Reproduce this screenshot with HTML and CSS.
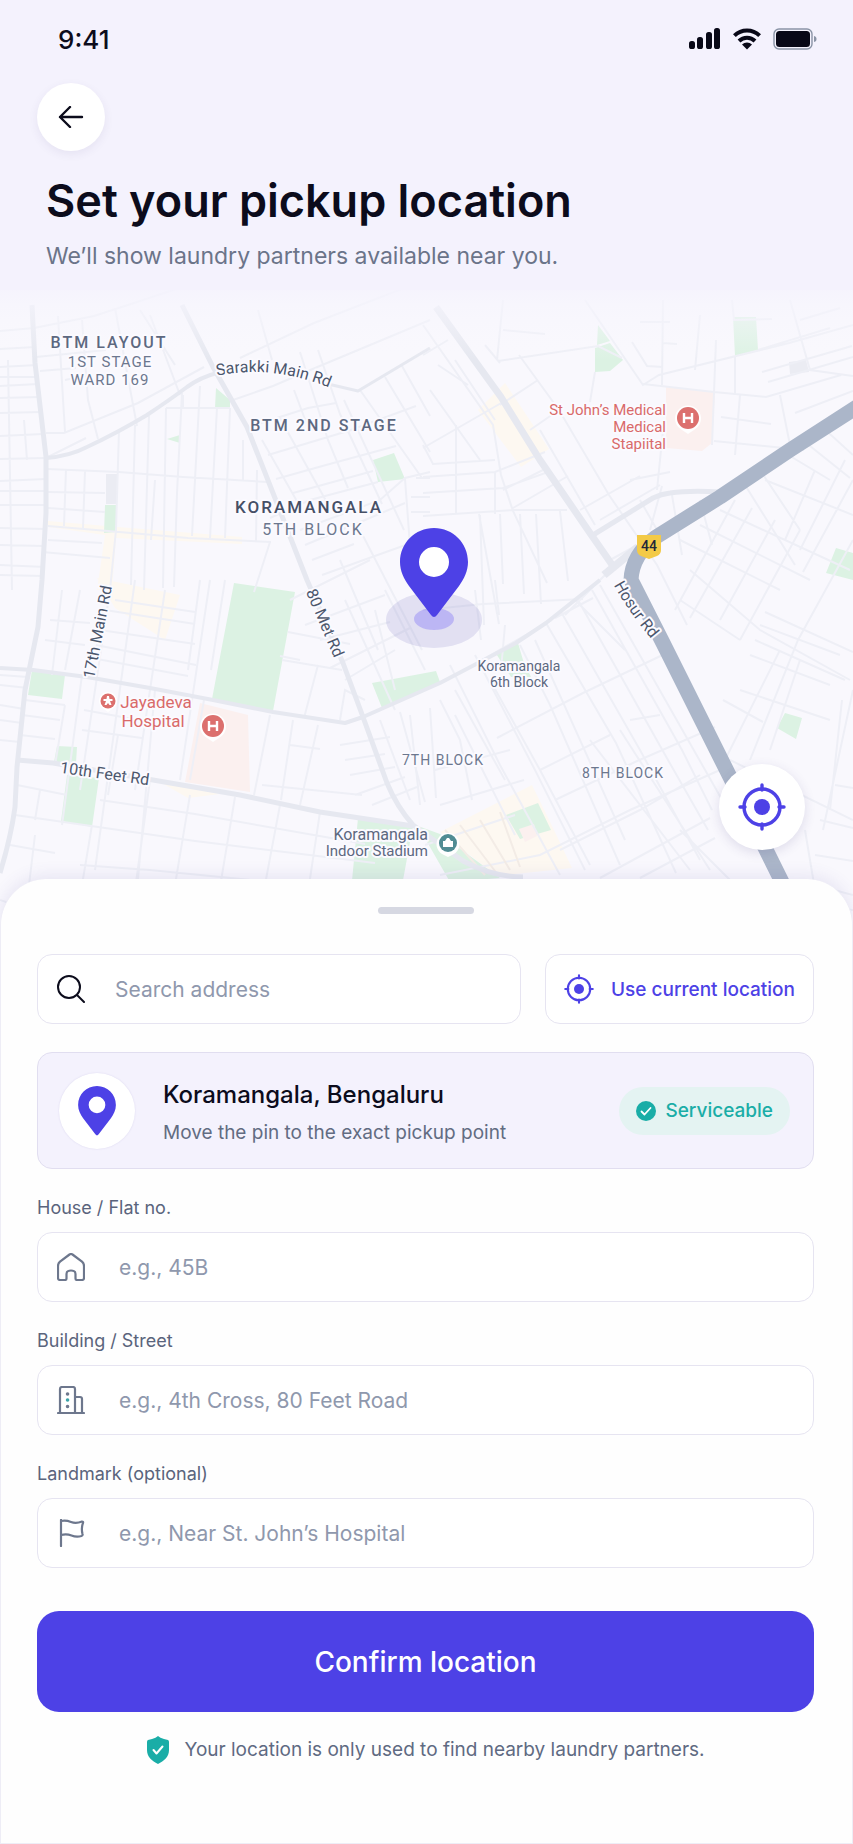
FILE: index.html
```html
<!DOCTYPE html>
<html lang="en">
<head>
<meta charset="utf-8">
<meta name="viewport" content="width=device-width, initial-scale=1">
<title>Set your pickup location</title>
<link rel="stylesheet" href="styles.css">
</head>
<body>
<svg class="sprite" aria-hidden="true">
  <symbol id="pin" viewBox="0 0 68 90">
    <path fill="#4d41e6" fill-rule="evenodd" d="M34 0C15 0 0 15 0 34c0 9 4 17 9 24l22 29q3 4 6 0l22-29c5-7 9-15 9-24C68 15 53 0 34 0zm0 19a15 15 0 1 1 0 30 15 15 0 0 1 0-30z"/>
  </symbol>
  <symbol id="locate" viewBox="0 0 48 48">
    <g fill="none" stroke="currentColor" stroke-width="3.4" stroke-linecap="round"><circle cx="24" cy="24" r="18"/><path d="M24 2v5M24 41v5M2 24h5M41 24h5"/></g>
    <circle cx="24" cy="24" r="8" fill="currentColor"/>
  </symbol>
</svg>
<main class="screen">
  <header class="header">
    <div class="status">
      <span class="status-time">9:41</span>
      <div class="status-icons">
        <svg width="32" height="22" viewBox="0 0 32 22" fill="#080817" aria-label="Signal"><rect x="0" y="13" width="6" height="8" rx="2.6"/><rect x="8" y="9" width="6" height="12" rx="2.6"/><rect x="17" y="4" width="6" height="17" rx="2.6"/><rect x="25" y="0" width="6" height="21" rx="2.6"/></svg>
        <svg width="28" height="22" viewBox="0 0 28 22" aria-label="Wi-Fi"><g fill="none" stroke="#080817" stroke-width="4"><path d="M1.400 7.600a18 18 0 0 1 25.200 0"/><path d="M6 13a11.500 11.500 0 0 1 16 0"/></g><path fill="#080817" d="M9 16.500a7.500 7.500 0 0 1 10 0L14 21.500z"/></svg>
        <svg width="44" height="22" viewBox="0 0 44 22" aria-label="Battery"><rect x="1" y="1" width="38" height="20" rx="5" fill="none" stroke="#8a94a6" stroke-width="1.400"/><rect x="3" y="3" width="34" height="16" rx="3.500" fill="#080817"/><path fill="#8a94a6" d="M41 8c2 .5 2.500 1.500 2.500 3s-.5 2.500-2.500 3z"/></svg>
      </div>
    </div>
    <button class="back" type="button" aria-label="Back">
      <svg width="26" height="22" viewBox="0 0 26 22" fill="none" stroke="#0c0c1c" stroke-width="2.400" stroke-linecap="round" stroke-linejoin="round"><path d="M24 11H2M12 1 2 11l10 10"/></svg>
    </button>
    <h1 class="title">Set your pickup location</h1>
    <p class="subtitle">We’ll show laundry partners available near you.</p>
  </header>

  <section class="map" aria-label="Map">
    <svg class="map-art" viewBox="0 290 853 640" preserveAspectRatio="xMidYMid slice">
      <defs>
        <linearGradient id="fade" x1="0" y1="0" x2="0" y2="1"><stop offset="0" stop-color="#f4f2fd"/><stop offset="0.300" stop-color="#f6f5fd" stop-opacity="0.700"/><stop offset="1" stop-color="#f9f8fd" stop-opacity="0"/></linearGradient>
        <path id="sarakki" d="M216 376Q272 364 330 388"/>
        <path id="hosur" d="M610 577Q622 604 657 646"/>
      </defs>
      <rect y="280" width="853" height="660" fill="#f9f8fd"/>

      <g fill="#fdf8f1">
        <path d="M478 410l27-27 44 66-28 18zM48 521l70 6 124 10v7l-126-6-4 52h-15l8-55-57-8zM97 578l83 17-15 45-50-32zM440 832l92-47 22 45 18 38-75 8zM160 782l60 12-32 4z"/>
      </g>
      <g fill="#fbf0ef">
        <path d="M666 387l49 5-3 51-10 8-36-3zM200 703l48 12 2 77-65-10z"/>
      </g>
      <g fill="#dcf2e3">
        <path d="M216 388l14 12v8h-15zM167 439l13-4v8zM105 505h11v27l-12 1zM373 460l21-7 11 26-27 3zM595 348l15-5 13 17-13 11-15 1zM598 325l12 16-13 4zM733 317h23l2 33-23 6zM836 548l17 5v27l-27-7zM234 583l61 9-22 119-61-12zM32 670l33 5-3 24-34-4zM57 746l20 1-1 16-22-1zM67 775l32 3-7 49-31-6zM372 683l64-12 4 11-17 10-41 16zM358 818l55 8-12 65h-50zM418 826l22 8 60 44-50 4zM495 652l23-9 5 17 8 17h-20zM785 713l17 5-6 21-19-11zM506 815l32-12 13 27-31 9z"/>
      </g>
      <path fill="#fbf0ef" d="M519 829l15-5 3 12-12 6z"/>
      <path fill="#ebecf3" d="M106 474h11v30h-11zM789 362l17-2 3 12-19 2z"/>

      <g class="street">
        <path d="M0 331l34-3M0 349l35-2M0 367l37-2M0 377h37M0 386l38-2M0 398l40-1M0 413l41-1M0 436l43-2M0 459l45-1M0 481l46-2M0 491h46M0 505h46M0 528l46 1M0 545l44 1M0 565l45 2M0 575l43 1M8 360l4 230M24 420l3 40"/>
        <path d="M34 328l60-12 43-14 60-20M36 357l70-7M58 316l7 116M82 320l6 80 10 39M115 308l22 118M150 315l30 80M40 371l36-3M46 433l18 0 74-30 66-36M65 380l24-5M140 310l35 55M46 458l40-20"/>
        <path d="M47 469l72 3 64 5 84 5M48 492l57 1M48 508l57 4M48 526l60 5 80 7 83 4M48 540l54 3M42 552l68 6M66 469l-2 57M85 471l-2 57M119 430l-3 100-6 60M135 425l-4 160M149 416l-5 174M166 408l-3 180M182 393l-5 100-3 94M200 386l-8 150M217 408l-7 130M230 408l-5 130M243 440v40M166 408l64 0M183 395v13M257 470l-1 72M155 480l-4 60"/>
        <path d="M233 400l40-14 42-18 115-48M240 358l74-35 116-45M258 310l14 50M300 352l28 88 20 48M318 350l22 64 42 90M258 424l50-16 28-5M268 455l80-24 68-25M276 479l50-14 70-19M293 493l80-22M262 440l40 70M280 418l50 90M344 400l60 130M360 390l62 88M385 377l45 75M402 366l28 50M294 390l12 32M270 542l-16 50M270 518l40-18 68-18M300 530l80-30 25-22 25-6M305 545l60-25 40-17M405 479l6 80M411 497h19M411 512h19M416 478h14M322 575l50-18 56-20M340 560l38 90M360 530l62 120M312 560l42-16"/>
        <path d="M423 325l70 100 8 50 12 36 34 72M423 355l25-15M430 390l50 70M423 448l80-46M423 445l10 19 62-4M423 477l72-5 50-20M423 493l80-5 48-17M423 516l90-6h54M495 472v42M513 508l55-32M503 490l40-20M456 425v90M480 515l4 110M500 514l3 70M520 514l4 80M536 514l5 90M560 511l8 70M479 514l20 110M438 365l30 20M498 361l100-15 24 12M503 300l-6 60M503 330l42 4M485 345l15 18M519 355l40 55 50 85 48 70 30 60M455 360l40 60M540 430l55 95M580 510l60-34M500 405l38-25M530 430l26-18"/>
        <path d="M585 300l58 85 16-10 130-32 64-18M595 372l-5 30M643 384l71 8 52 5 75-22M663 300l-1 85M700 315l-5 55M632 342l15 24 16 1M640 322h30M663 343l14 1M716 340l-4 105M735 356v38M732 300l2 20 38-1M740 395l-5 60M714 441l90 9M721 417l50 7M780 395l10 50M758 350l72-22M790 300l20 70 43 6M762 372l90-26M768 382l85-25M795 413l58-22M800 320l40-12M657 490l6-60M650 530l12-44M630 480l40-8M600 520l60-35M610 560l55-30M640 500l20 35M672 495l10 60M700 500l12 45M780 450l50 30M800 438l50 40M820 425l33 30M815 470l-30 70M845 460l-45 90M853 480l-50 92M765 480l88 35M760 470l40 60M745 485l50 80"/>
        <path d="M680 540l100 50M700 525l110 55M720 510l130 60M735 500l-60 110M752 508l-62 110M775 520l-55 100M800 530l-60 110M690 570l70 60 90 50M680 600l60 40M853 540l-55 100-48 120M760 625l80 30M755 640l90 40M750 655l80 30M765 612l88 40M780 650l-55 110M800 660l-30 90M740 690l90 30M723 700l40 22M853 690l-30 140M842 700l-12 110M730 760l123 60M820 820l33 8M805 830l15 90M815 855l38 6M835 785l18 3"/>
        <path d="M423 610l60-6 100-5M475 590l6 50M495 580l4 35M505 625l-4 45M552 620l-70 40M555 618l38-20M535 640l90 200M520 645l30 60 70 160M546 623l70 120 60 130M560 610l80 140 60 110M578 600l90 160 40 70M592 590l90 160 30 60M600 585l125 220M605 575l-40 40M497 738l86-45 90-43M575 600l50 50M450 665l50 100 60 110M475 655l60 115 50 100M490 680l50 90 50 95M540 770l70-35M630 720l30-5M555 800l80-38 80-35M560 850l80-40 60-35M440 875l100-20 90-45 90-40M600 878l110-60M640 878l75-40M590 740l100 130M620 730l90 140M680 830l60 60M440 700l20 40 12 60M455 690l50 90M430 708l6 90M410 715l10 90M440 805l84-25M425 845l90-30M455 715l60 120M435 770l75-20"/>
        <path class="beige" d="M445 830l40 45M460 825l38 50M480 820l30 50M500 812l20 55"/>
        <path d="M290 600l80-40M305 625l80-30M320 640l70-18M330 668l80-40M345 680l50-30M300 660l-20-4M288 632l62 12M282 660l60 10M318 665l-14 53M345 600l50 110M375 610l20 80M385 590l40 80M365 700l-20-10-5 30M340 745l50-8M345 760l40-6M350 775l45-8M355 795l50-18M372 805l45-18M400 712l25 90M380 720l30 80M270 715l-16 80M293 720l-12 80M318 725l-18 80M290 745l30 4M262 785l100 10M110 590l-30 200M135 580l-40 290M165 590l-30 200M210 580l-30 200M200 580l-12 90M225 580l-14 90"/>
        <path d="M105 610l90 14M100 630l95 14M96 645l100 20M92 658l96 18M115 600l80 12M50 620l40 3M45 640l40 5M62 590l-10 85M80 590l-15 80M25 700l40 5M22 715l38 5M20 735l35 4M0 675l28 2M0 685l28 3M0 705l24 4M0 720l22 3M0 740l20 2M82 675l-20 150M84 710l76 14M82 730l60 8M118 735l-10 60M155 690l-18 200M15 815l180 26 180 22M17 785l50 10M35 835l-6 50M100 800l95 14 170 30M190 795l-15 90M150 780l-15 110M235 797l-15 90M280 805l-16 85M320 812l-12 80M92 825l-10 60M80 865l70 5 200 20M10 845l45 8M0 900l60 20M40 790l-5 30M65 705l-10 60M190 780l14-80"/>
        <path d="M853 895l-30-8M853 910l-20-2"/>
      </g>
      <g class="road">
        <path d="M32 305l3 58 11 94v56l-4 67-4 47-13 63-8 77-2 40q-4 30-15 66"/>
        <path d="M46 458q24-2 41-11 30-14 60-32 24-16 40-28 14-10 30-14" stroke-width="4"/>
        <path d="M328 384l30 7 72-43" stroke-width="3"/>
        <path d="M182 305l31 62 34 60 26 66 34 87 36 83 20 54 24 66q10 24 26 42l50 36q30 16 60 16" />
        <path d="M0 668l33 2 54 7 63 11 63 12 60 12 72 11 18-6 77-34 76-40 30-20 54-43" stroke-width="4"/>
        <path d="M17 760l36 3 100 17 87 15 80 17 93 14"/>
        <path d="M593 535l60-37q8-4 17-5 20-3 50-1"/>
        <path d="M436 307l65 90 39 63 50 73 25 36" stroke-width="7"/>
        <path d="M604 575l34-28" stroke-width="8"/>
      </g>
      <path class="highway" d="M860 405l-70 45-70 47-64 40q-24 18-25 43l32 63 67 134 51 103 30 60"/>
      <rect y="280" width="853" height="80" fill="url(#fade)"/>

      <g class="label">
        <text x="109" y="348" class="caps">BTM LAYOUT</text>
        <text x="110" y="367" class="caps mid light">1ST STAGE</text>
        <text x="110" y="385" class="caps mid light">WARD 169</text>
        <text x="324" y="431" class="caps">BTM 2ND STAGE</text>
        <text x="309" y="513" class="caps dark">KORAMANGALA</text>
        <text x="313" y="535" class="caps light">5TH BLOCK</text>
        <text x="443" y="765" class="caps small light">7TH BLOCK</text>
        <text x="623" y="778" class="caps small light">8TH BLOCK</text>
        <text x="519" y="671" class="small">Koramangala</text>
        <text x="519" y="687" class="small">6th Block</text>
        <text x="428" y="840" class="end">Koramangala</text>
        <text x="428" y="856" class="end mid">Indoor Stadium</text>
        <g class="red"><text x="666" y="415" class="end mid">St John’s Medical</text><text x="666" y="432" class="end mid">Medical</text><text x="666" y="449" class="end mid">Stapiital</text>
        <text x="156" y="708" class="big">Jayadeva</text><text x="153" y="727" class="big">Hospital</text></g>
        <g class="roadname">
          <text><textPath href="#sarakki" startOffset="50%">Sarakki Main Rd</textPath></text>
          <text transform="translate(103 633) rotate(-79)">17th Main Rd</text>
          <text transform="translate(320 625) rotate(67)">80 Met Rd</text>
          <text transform="translate(104 779) rotate(8)">10th Feet Rd</text>
          <text><textPath href="#hosur" startOffset="50%">Hosur Rd</textPath></text>
        </g>
      </g>

      <g class="poi">
        <g transform="translate(688 418)"><path d="M0 16l-6-4a13 13 0 1 1 12 0z" fill="#fff"/><circle r="11" fill="#dc706e"/><path class="h" d="M-4-5V5M4-5V5M-4 0H4"/></g>
        <g transform="translate(213 726)"><path d="M0 16l-6-4a13 13 0 1 1 12 0z" fill="#fff"/><circle r="11" fill="#dc706e"/><path class="h" d="M-4-5V5M4-5V5M-4 0H4"/></g>
        <g transform="translate(108 701)"><path d="M0 11l-4-3a9 9 0 1 1 8 0z" fill="#fff"/><circle r="7.500" fill="#dc706e"/><path fill="#fff" d="M-1-5h2l.5 3h3v2H2l1.500 4h-2L0 2l-1.500 2h-2L-2 0h-2.500v-2h3z"/></g>
        <g transform="translate(448 843)"><path d="M0 14l-6-3a11.500 11.500 0 1 1 12 0z" fill="#fff"/><circle r="9" fill="#508c93"/><path fill="#fff" d="M-5-2h2l2-3h2l2 3h2v6H-5z"/></g>
      </g>
      <g transform="translate(649 546)"><path fill="#f3ca47" d="M-12-11h24v15q0 4-4 6l-8 3-8-3q-4-2-4-6z"/><text class="shield" y="5">44</text></g>

      <ellipse cx="434" cy="620" rx="48" ry="28" fill="#5c56b4" fill-opacity="0.150"/>
      <ellipse cx="434" cy="619" rx="20" ry="11" fill="#7b6cf6" fill-opacity="0.360"/>
      <circle cx="434" cy="561" r="18" fill="#fff"/>
      <use href="#pin" x="400" y="528" width="68" height="90"/>
    </svg>
    <button class="recenter" type="button" aria-label="Recenter map"><svg width="48" height="48"><use href="#locate"/></svg></button>
  </section>

  <form class="sheet" onsubmit="return false">
    <div class="handle"></div>
    <div class="search-row">
      <label class="box search">
        <svg width="28" height="28" viewBox="0 0 28 28" fill="none" stroke="#0c0c1c" stroke-width="2" stroke-linecap="round"><circle cx="12" cy="12" r="11"/><path d="M20 20l7 7"/></svg>
        <input type="text" placeholder="Search address" aria-label="Search address">
      </label>
      <button class="box current" type="button"><svg width="30" height="30"><use href="#locate"/></svg>Use current location</button>
    </div>

    <section class="place">
      <div class="place-icon"><svg width="38" height="50"><use href="#pin"/></svg></div>
      <div class="place-text">
        <h2 class="place-name">Koramangala, Bengaluru</h2>
        <p class="place-hint">Move the pin to the exact pickup point</p>
      </div>
      <span class="badge"><svg width="20" height="20" viewBox="0 0 20 20"><circle cx="10" cy="10" r="10" fill="#1aada7"/><path d="M5.500 10.500l3 3 6-6.500" fill="none" stroke="#fff" stroke-width="1.800" stroke-linecap="round" stroke-linejoin="round"/></svg>Serviceable</span>
    </section>

    <div class="field">
      <label for="house">House / Flat no.</label>
      <div class="box">
        <svg class="ico" width="28" height="28" viewBox="0 0 28 28"><path d="M1 13c0-2 .5-3 2-4.300L12.500 1.500q1.500-1 3 0L25 8.700c1.500 1.300 2 2.300 2 4.300v12q0 2-2 2h-5q-1.500 0-1.500-1.500V21q0-3.500-4.500-3.500T9.500 21v4.500Q9.500 27 8 27H3q-2 0-2-2z"/></svg>
        <input id="house" type="text" placeholder="e.g., 45B">
      </div>
    </div>
    <div class="field">
      <label for="street">Building / Street</label>
      <div class="box">
        <svg class="ico" width="28" height="28" viewBox="0 0 28 28"><path d="M1 27h26M3 27V3q0-2 2-2h11q2 0 2 2v24M18 11h5q2 0 2 2v14"/><path stroke-width="3.500" d="M10.500 8h.1M10.500 20.500h.1"/><path stroke-width="3.500" stroke="#3aa3a8" d="M10.500 14h.1"/></svg>
        <input id="street" type="text" placeholder="e.g., 4th Cross, 80 Feet Road">
      </div>
    </div>
    <div class="field">
      <label for="landmark">Landmark (optional)</label>
      <div class="box">
        <svg class="ico" width="28" height="28" viewBox="0 0 28 28"><path d="M4 27V1M4 2q5-1 10 1t11-.5q1.500 0 1 1.500-2 5-.5 11 .5 1.500-1 2-5 1.500-10-.5T4 16"/></svg>
        <input id="landmark" type="text" placeholder="e.g., Near St. John’s Hospital">
      </div>
    </div>

    <button class="confirm" type="submit">Confirm location</button>
    <p class="note"><svg width="24" height="28" viewBox="0 0 24 28"><path fill="#1aada7" d="M12 0q2 2 6 3l4 1q1 .3 1 2v8c0 7-5 11-11 14C6 25 1 21 1 14V6q0-1.700 1-2l4-1q4-1 6-3z"/><path d="M7.500 14l3 3.500 6-7" fill="none" stroke="#fff" stroke-width="2" stroke-linecap="round" stroke-linejoin="round"/></svg>Your location is only used to find nearby laundry partners.</p>
  </form>
</main>
</body>
</html>
```
FILE: styles.css
```css
* { box-sizing: border-box; }
body {
  margin: 0;
  background: #f4f2fd;
  font-family: Inter, "Liberation Sans", sans-serif;
  color: #0c0c1c;
}
h1, h2, p { margin: 0; }
button, input { font: inherit; }
button { cursor: pointer; }
svg { flex-shrink: 0; }
.sprite { position: absolute; width: 0; height: 0; }
.screen { min-height: 100vh; display: flex; flex-direction: column; }

.header { padding: 23px 36px 0 37px; }
.status {
  display: flex;
  align-items: center;
  justify-content: space-between;
  height: 32px;
  padding-left: 21px;
}
.status-time { font-size: 26px; font-weight: 500; }
.status-icons { display: flex; align-items: center; gap: 12px; }
.back {
  display: flex;
  align-items: center;
  justify-content: center;
  width: 68px;
  height: 68px;
  margin-top: 28px;
  border: 0;
  border-radius: 50%;
  background: #fff;
  box-shadow: 0 3px 10px rgba(60, 50, 120, 0.08);
}
.title { margin: 20px 9px 0; font-size: 45px; line-height: 60px; font-weight: 600; }
.subtitle { margin: 9px 9px 0; font-size: 23px; line-height: 32px; color: #6b7489; }

.map { position: relative; margin-top: 18px; }
.map-art { display: block; width: 100%; height: auto; aspect-ratio: 853 / 640; }
.street { fill: none; stroke: #eeeff6; stroke-width: 2; }
.beige { stroke: #f3ece6; }
.road { fill: none; stroke: #e6e8f0; stroke-width: 5; stroke-linejoin: round; }
.highway { fill: none; stroke: #abb6c9; stroke-width: 15; stroke-linejoin: round; }
.label {
  font-family: Roboto, sans-serif;
  font-size: 16px;
  fill: #5d6880;
  text-anchor: middle;
  paint-order: stroke;
  stroke: #fbfaff;
  stroke-width: 4px;
  stroke-linejoin: round;
}
.caps { letter-spacing: 2px; font-weight: 500; }
.light { fill: #6c778e; font-weight: 400; }
.small { font-size: 14px; }
.mid { font-size: 15px; }
.caps.small, .caps.mid { letter-spacing: 1px; }
.big { font-size: 17px; }
.dark { font-size: 17px; fill: #454f66; }
.end { text-anchor: end; }
.red { fill: #d96a6a; }
.roadname { fill: #4b566c; font-size: 16px; }
.h { fill: none; stroke: #fff; stroke-width: 2.4; }
.shield { font: 500 14px Roboto, sans-serif; fill: #22263a; text-anchor: middle; }
.recenter {
  position: absolute;
  right: 48px;
  bottom: 80px;
  display: flex;
  align-items: center;
  justify-content: center;
  width: 86px;
  height: 86px;
  border: 0;
  border-radius: 50%;
  background: #fff;
  color: #4d41e6;
  box-shadow: 0 3px 12px rgba(60, 50, 120, 0.14);
}

.sheet {
  position: relative;
  flex: 1;
  display: flex;
  flex-direction: column;
  margin-top: -51px;
  padding: 28px 38px 72px 36px;
  border: 1px solid #eeedf6;
  border-top: 0;
  border-radius: 46px 46px 0 0;
  background: #fefefe;
  box-shadow: 0 -4px 16px rgba(80, 70, 160, 0.1);
}
.handle { width: 96px; height: 7px; margin: 0 auto; border-radius: 4px; background: #d6d8e2; }
.box {
  display: flex;
  align-items: center;
  height: 70px;
  padding: 0 19px;
  border: 1px solid #e6e4f1;
  border-radius: 15px;
  background: #fff;
}
.box input {
  flex: 1;
  min-width: 0;
  height: 100%;
  padding: 0;
  border: 0;
  outline: 0;
  background: none;
  color: #0c0c1c;
  font-size: 21px;
}
.box input::placeholder { color: #8f98ad; opacity: 1; }
.search-row { display: flex; gap: 24px; margin-top: 40px; }
.search { flex: 1; gap: 30px; min-width: 0; }
.current { gap: 17px; padding: 0 18px; color: #4d41e6; font-size: 19px; font-weight: 500; white-space: nowrap; }
.place {
  display: flex;
  align-items: center;
  min-height: 117px;
  margin-top: 28px;
  padding: 18px 23px 18px 21px;
  border: 1px solid #e1def0;
  border-radius: 15px;
  background: #f4f2fd;
}
.place-icon {
  display: flex;
  align-items: center;
  justify-content: center;
  width: 76px;
  height: 76px;
  border-radius: 50%;
  background: #fff;
  box-shadow: 0 0 2px rgba(80, 70, 160, 0.15);
}
.place-text { flex: 1; min-width: 0; padding-top: 4px; margin-left: 28px; }
.place-name { font-size: 24px; line-height: 36px; font-weight: 500; }
.place-hint { margin-top: 4px; font-size: 19px; line-height: 32px; color: #626c82; }
.badge {
  display: flex;
  align-items: center;
  gap: 9px;
  height: 48px;
  padding: 0 17px;
  border-radius: 24px;
  background: #e4f3f2;
  color: #1aada7;
  font-size: 19px;
  font-weight: 500;
}
.field { margin-top: 23px; }
.field label { display: block; margin-bottom: 8px; font-size: 18px; line-height: 32px; color: #5a647c; }
.field .box { gap: 34px; }
.ico { fill: none; stroke: #6d778d; stroke-width: 2.2; stroke-linecap: round; stroke-linejoin: round; }
.confirm {
  height: 101px;
  margin-top: 43px;
  border: 0;
  border-radius: 22px;
  background: #4d41e6;
  color: #fff;
  font-size: 28px;
  font-weight: 500;
}
.note {
  display: flex;
  align-items: center;
  justify-content: center;
  gap: 14px;
  margin-top: 22px;
  font-size: 19px;
  line-height: 32px;
  color: #5f6a82;
}
```
